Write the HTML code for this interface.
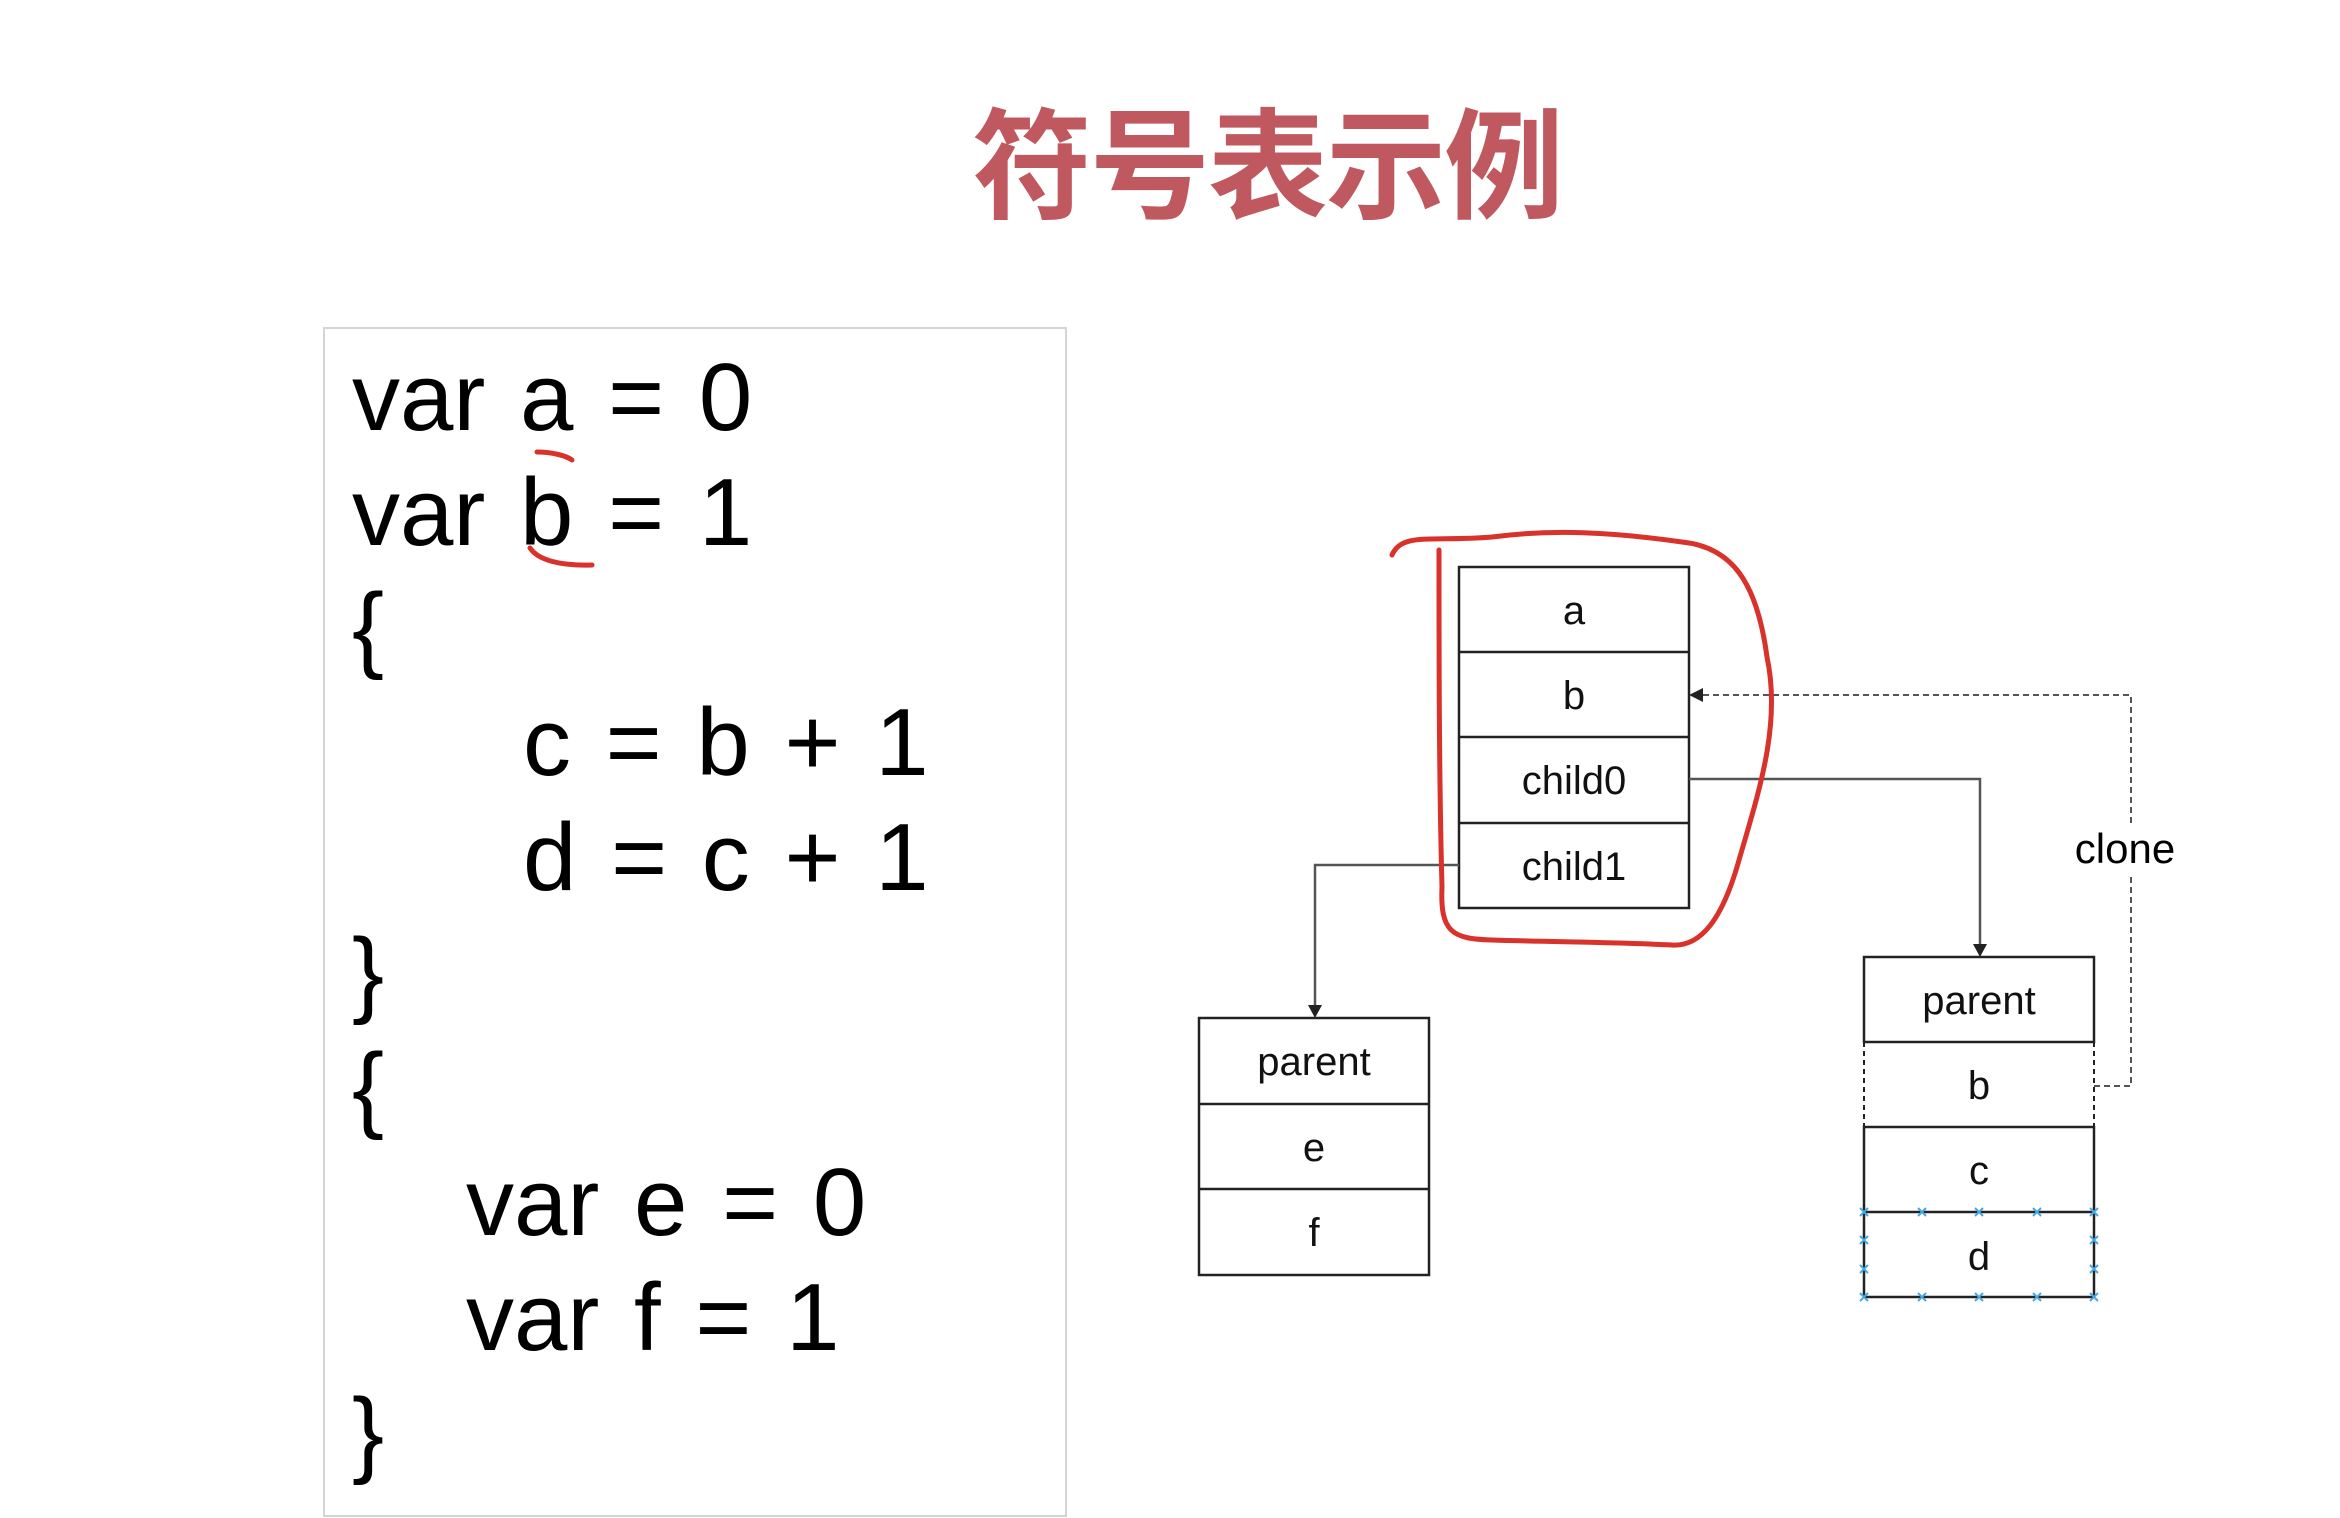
<!DOCTYPE html>
<html><head><meta charset="utf-8"><style>
html,body{margin:0;padding:0;background:#fff;}
body{width:2340px;height:1518px;position:relative;overflow:hidden;font-family:"Liberation Sans","Noto Sans CJK SC",sans-serif;}
.title{position:absolute;left:972px;top:87px;font-size:120px;font-weight:bold;color:#c0585f;letter-spacing:-2px;line-height:140px;font-family:"Noto Sans CJK SC","WenQuanYi Zen Hei",sans-serif;}
.code{position:absolute;left:323px;top:327px;width:744px;height:1190px;border:2px solid #d4d4d4;box-sizing:border-box;}
.ln{position:absolute;font-size:96px;color:#000;line-height:1;white-space:pre;word-spacing:8px;}
</style></head><body>
<div class="title">符号表示例</div>
<div class="code"></div>
<div class="ln" style="left:352px;top:350px">var a = 0</div>
<div class="ln" style="left:352px;top:465px">var b = 1</div>
<div class="ln" style="left:352px;top:580px">{</div>
<div class="ln" style="left:523px;top:695px">c = b + 1</div>
<div class="ln" style="left:523px;top:810px">d = c + 1</div>
<div class="ln" style="left:352px;top:925px">}</div>
<div class="ln" style="left:352px;top:1040px">{</div>
<div class="ln" style="left:466px;top:1155px">var e = 0</div>
<div class="ln" style="left:466px;top:1270px">var f = 1</div>
<div class="ln" style="left:352px;top:1385px">}</div>
<svg width="2340" height="1518" style="position:absolute;left:0;top:0" font-family="Liberation Sans, sans-serif" font-size="40" text-anchor="middle">
<g transform="translate(-8,-3)">
<g fill="none" stroke="#222" stroke-width="2.5">
<rect x="1467" y="570" width="230" height="341"/>
<line x1="1467" y1="655" x2="1697" y2="655"/><line x1="1467" y1="740" x2="1697" y2="740"/><line x1="1467" y1="826" x2="1697" y2="826"/>
<rect x="1207" y="1021" width="230" height="257"/>
<line x1="1207" y1="1107" x2="1437" y2="1107"/><line x1="1207" y1="1192" x2="1437" y2="1192"/>
<rect x="1872" y="960" width="230" height="85"/>
<rect x="1872" y="1130" width="230" height="170"/>
<line x1="1872" y1="1215" x2="2102" y2="1215"/>
<g stroke-dasharray="5,4" stroke-width="2"><line x1="1872" y1="1045" x2="1872" y2="1130"/><line x1="2102" y1="1045" x2="2102" y2="1130"/><line x1="1872" y1="1130" x2="2102" y2="1130"/></g>
<polyline points="1467,868 1323,868 1323,1012" stroke="#555" stroke-width="2.5"/>
<polyline points="1697,782 1988,782 1988,951" stroke="#555" stroke-width="2.5"/>
<polyline points="2102,1089 2139,1089 2139,698 1710,698" stroke="#555" stroke-width="2" stroke-dasharray="6,4"/>
</g>
<g fill="#222"><path d="M1316,1008 L1330,1008 L1323,1021Z"/><path d="M1981,947 L1995,947 L1988,960Z"/><path d="M1697,698 L1711,691 L1711,705Z"/></g>
<rect x="2078" y="828" width="112" height="48" fill="#fff"/>
<text x="2133" y="866" font-size="42">clone</text>
<g fill="#111">
<text x="1582" y="627">a</text><text x="1582" y="712">b</text><text x="1582" y="797">child0</text><text x="1582" y="883">child1</text>
<text x="1322" y="1078">parent</text><text x="1322" y="1164">e</text><text x="1322" y="1249">f</text>
<text x="1987" y="1017">parent</text><text x="1987" y="1102">b</text><text x="1987" y="1187">c</text><text x="1987" y="1273">d</text>
</g>
<g stroke="#4aa8e0" stroke-width="2" fill="none">
<path d="M1868,1211l8,8m0-8l-8,8M1926,1211l8,8m0-8l-8,8M1983,1211l8,8m0-8l-8,8M2041,1211l8,8m0-8l-8,8M2098,1211l8,8m0-8l-8,8M1868,1296l8,8m0-8l-8,8M1926,1296l8,8m0-8l-8,8M1983,1296l8,8m0-8l-8,8M2041,1296l8,8m0-8l-8,8M2098,1296l8,8m0-8l-8,8M1868,1239l8,8m0-8l-8,8M1868,1268l8,8m0-8l-8,8M2098,1239l8,8m0-8l-8,8M2098,1268l8,8m0-8l-8,8"/>
</g>
<g fill="none" stroke="#d8322a" stroke-width="5" stroke-linecap="round">
<path d="M1400,558 C1410,535 1440,545 1500,540 C1560,532 1620,535 1690,545 C1740,550 1765,585 1775,660 C1790,730 1765,800 1745,870 C1730,920 1710,950 1680,948 C1620,945 1560,945 1500,943 C1460,942 1448,935 1450,890 C1447,780 1447,660 1447,553"/>
</g>
</g>
<g fill="none" stroke="#d8322a" stroke-width="5" stroke-linecap="round">
<path d="M537,452 C550,452 565,455 572,460"/>
<path d="M530,548 C538,560 560,566 592,565"/>
</g>
</svg>
</body></html>
